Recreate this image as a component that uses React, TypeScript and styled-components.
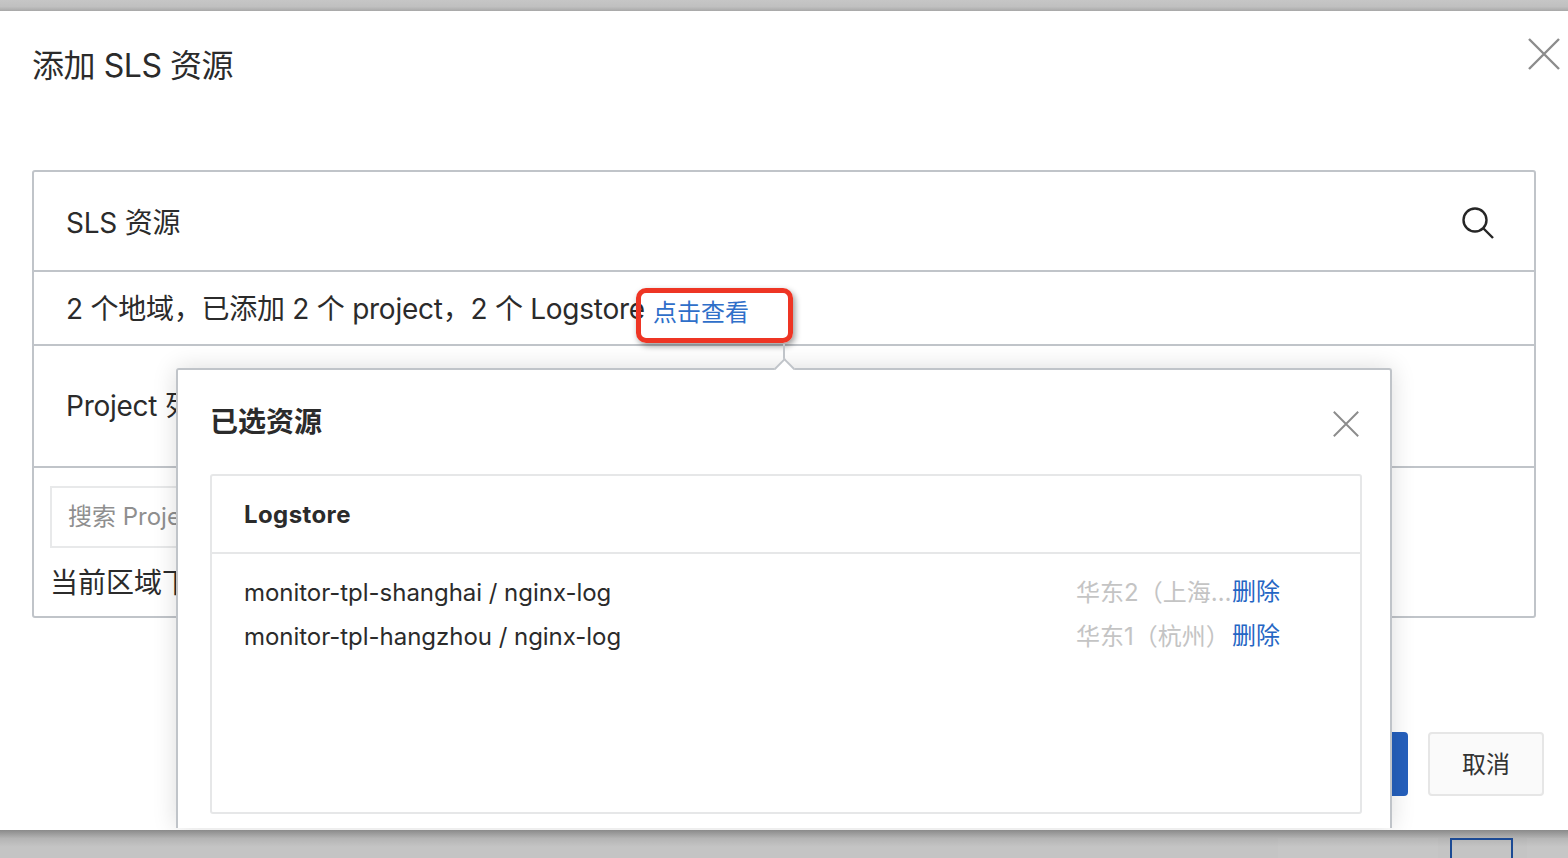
import styled, { createGlobalStyle } from "styled-components";

const GlobalStyle = createGlobalStyle`
  html, body {
    margin: 0;
    padding: 0;
    height: 100%;
    overflow: hidden;
    background: #c4c4c4;
  }
  * {
    box-sizing: border-box;
  }
  body {
    font-family: Inter, "Noto Sans CJK SC", sans-serif;
    color: #2b2b2b;
  }
`;

const Page = styled.div`
  width: 1568px;
  height: 858px;
  display: flex;
  flex-direction: column;
`;

const TopStrip = styled.div`
  height: 11px;
  flex: none;
  background: linear-gradient(180deg, #c6c6c6 0%, #c0c0c0 60%, #a8a8a8 100%);
`;

const BottomStrip = styled.div`
  height: 28px;
  flex: none;
  display: flex;
  justify-content: flex-end;
  padding-top: 8px;
  background: linear-gradient(180deg, #8a8a8a 0%, #b4b4b4 30%, #c4c4c4 60%);
`;

const StripSegment = styled.div`
  width: ${(p) => p.$width}px;
  margin-right: ${(p) => p.$gap}px;
  background: rgba(255, 255, 255, 0.04);
`;

const StripBox = styled.div`
  width: 63px;
  margin-right: 14px;
  border: 2px solid #1c4a94;
  border-bottom: none;
`;

const Dialog = styled.div`
  position: relative;
  height: 819px;
  flex: none;
  background: #fff;
  overflow: hidden;
  padding: 0 24px 0 32px;
`;

const DialogHeader = styled.div`
  height: 159px;
  padding-top: 33px;
`;

const DialogTitle = styled.h1`
  margin: 0;
  font-size: 32px;
  line-height: 44px;
  font-weight: 400;
  letter-spacing: -0.45px;
`;

const CloseButton = styled.button`
  position: absolute;
  top: ${(p) => p.$top}px;
  right: ${(p) => p.$right}px;
  width: ${(p) => p.$size}px;
  height: ${(p) => p.$size}px;
  padding: 0;
  border: none;
  background: none;
  display: block;
  svg {
    display: block;
    width: 100%;
    height: 100%;
  }
`;

const Panel = styled.div`
  width: 1504px;
  height: 448px;
  border: 2px solid #c0c4c9;
  border-radius: 3px;
`;

const PanelRow = styled.div`
  display: flex;
  align-items: center;
  justify-content: space-between;
  height: ${(p) => p.$height}px;
  padding: ${(p) => p.$pad || 0}px 40px 0 32px;
  border-bottom: 2px solid #c0c4c9;
  font-size: 28px;
  line-height: 40px;
  letter-spacing: -0.25px;
`;

const SearchIcon = styled.svg`
  width: 34px;
  height: 34px;
  flex: none;
  margin-right: -1px;
`;

const Summary = styled.span`
  white-space: nowrap;
`;

const ViewLink = styled.a`
  position: relative;
  display: inline-block;
  margin-left: 8px;
  font-size: 24px;
  letter-spacing: 0;
  color: #2f6fc9;
  vertical-align: -2px;
`;

const Highlight = styled.span`
  position: absolute;
  left: -17px;
  top: -5px;
  width: 157px;
  height: 55px;
  border: 5px solid #ee3524;
  border-radius: 10px;
  box-shadow: 2px 3px 6px rgba(0, 0, 0, 0.4);
  pointer-events: none;
`;

const SearchSection = styled.div`
  padding: 18px 16px;
`;

const SearchBox = styled.div`
  width: 400px;
  height: 62px;
  display: flex;
  align-items: center;
  padding: 0 0 6px 16px;
  border: 2px solid #e8e9ea;
  font-size: 24px;
  color: #8f8f8f;
`;

const RegionNote = styled.div`
  margin-top: 15px;
  font-size: 28px;
  line-height: 40px;
`;

const Footer = styled.div`
  display: flex;
  justify-content: flex-end;
  gap: 20px;
  margin-top: 114px;
`;

const FooterButton = styled.button`
  width: 116px;
  height: 64px;
  padding: 0 0 4px;
  font-family: inherit;
  font-size: 24px;
  border-radius: 4px;
  border: 2px solid ${(p) => (p.$primary ? "#2560bd" : "#e6e6e6")};
  background: ${(p) => (p.$primary ? "#2560bd" : "#fafafa")};
  color: ${(p) => (p.$primary ? "#fff" : "#333")};
`;

const Popover = styled.div`
  position: absolute;
  left: 176px;
  top: 357px;
  width: 1216px;
  height: 460px;
  padding: 0 30px 0 32px;
  background: #fff;
  border: 2px solid #c0c4c9;
  border-bottom: none;
  border-radius: 3px 3px 0 0;
  box-shadow: 0 0 24px rgba(0, 0, 0, 0.14);
`;

const Connector = styled.span`
  position: absolute;
  left: 605px;
  top: -26px;
  width: 2px;
  height: 15px;
  background: #c0c4c9;
`;

const Arrow = styled.span`
  position: absolute;
  left: 599px;
  top: -9px;
  width: 15px;
  height: 15px;
  background: #fff;
  border-top: 2px solid #c0c4c9;
  border-left: 2px solid #c0c4c9;
  transform: rotate(45deg);
`;

const PopoverTitle = styled.h2`
  margin: 0;
  height: 104px;
  padding-top: 32px;
  font-size: 28px;
  line-height: 40px;
  font-weight: 600;
`;

const ResourceTable = styled.div`
  width: 1152px;
  height: 340px;
  border: 2px solid #e6e7e8;
  border-radius: 3px;
`;

const TableHead = styled.div`
  height: 78px;
  display: flex;
  align-items: center;
  padding-left: 32px;
  border-bottom: 2px solid #e6e7e8;
  font-size: 24px;
  font-weight: 700;
  letter-spacing: 0.4px;
`;

const TableBody = styled.div`
  padding: 16px 80px 0 32px;
`;

const ResourceRow = styled.div`
  display: flex;
  align-items: center;
  height: 44px;
  font-size: 24px;
`;

const ResourceName = styled.span`
  flex: 1;
  min-width: 0;
  letter-spacing: -0.03px;
`;

const ResourceRegion = styled.span`
  width: 156px;
  margin-bottom: 4px;
  white-space: nowrap;
  overflow: hidden;
  text-overflow: ellipsis;
  color: #c4c4c4;
`;

const DeleteLink = styled.a`
  margin-bottom: 6px;
  color: #2566c4;
`;

const resources = [
  { name: "monitor-tpl-shanghai / nginx-log", region: "华东2（上海）" },
  { name: "monitor-tpl-hangzhou / nginx-log", region: "华东1（杭州）" },
];

function CloseIcon() {
  return (
    <svg viewBox="0 0 32 32" fill="none" stroke="#8c8c8c" strokeWidth="2.4">
      <path d="M1 1 L31 31 M31 1 L1 31" />
    </svg>
  );
}

export default function App() {
  return (
    <Page>
      <GlobalStyle />
      <TopStrip />
      <Dialog>
        <DialogHeader>
          <DialogTitle>添加 SLS 资源</DialogTitle>
        </DialogHeader>
        <CloseButton $top={27} $right={8} $size={32}>
          <CloseIcon />
        </CloseButton>
        <Panel>
          <PanelRow $height={100} $pad={4}>
            <span>SLS 资源</span>
            <SearchIcon viewBox="0 0 34 34" fill="none" stroke="#262626" strokeWidth="2.4">
              <circle cx="14" cy="14" r="11.5" />
              <path d="M22.5 22.5 L32 32" />
            </SearchIcon>
          </PanelRow>
          <PanelRow $height={74} $pad={6}>
            <Summary>
              2 个地域，已添加 2 个 project，2 个 Logstore
              <ViewLink>
                点击查看
                <Highlight />
              </ViewLink>
            </Summary>
          </PanelRow>
          <PanelRow $height={122}>
            <span>Project 列表</span>
          </PanelRow>
          <SearchSection>
            <SearchBox>搜索 Project</SearchBox>
            <RegionNote>当前区域下</RegionNote>
          </SearchSection>
        </Panel>
        <Footer>
          <FooterButton $primary>确定</FooterButton>
          <FooterButton>取消</FooterButton>
        </Footer>
        <Popover>
          <Connector />
          <Arrow />
          <PopoverTitle>已选资源</PopoverTitle>
          <CloseButton $top={41} $right={31} $size={26}>
            <CloseIcon />
          </CloseButton>
          <ResourceTable>
            <TableHead>Logstore</TableHead>
            <TableBody>
              {resources.map((r) => (
                <ResourceRow key={r.name}>
                  <ResourceName>{r.name}</ResourceName>
                  <ResourceRegion>{r.region}</ResourceRegion>
                  <DeleteLink>删除</DeleteLink>
                </ResourceRow>
              ))}
            </TableBody>
          </ResourceTable>
        </Popover>
      </Dialog>
      <BottomStrip>
        <StripSegment $width={160} $gap={12} />
        <StripBox />
        <StripSegment $width={41} $gap={0} />
      </BottomStrip>
    </Page>
  );
}
